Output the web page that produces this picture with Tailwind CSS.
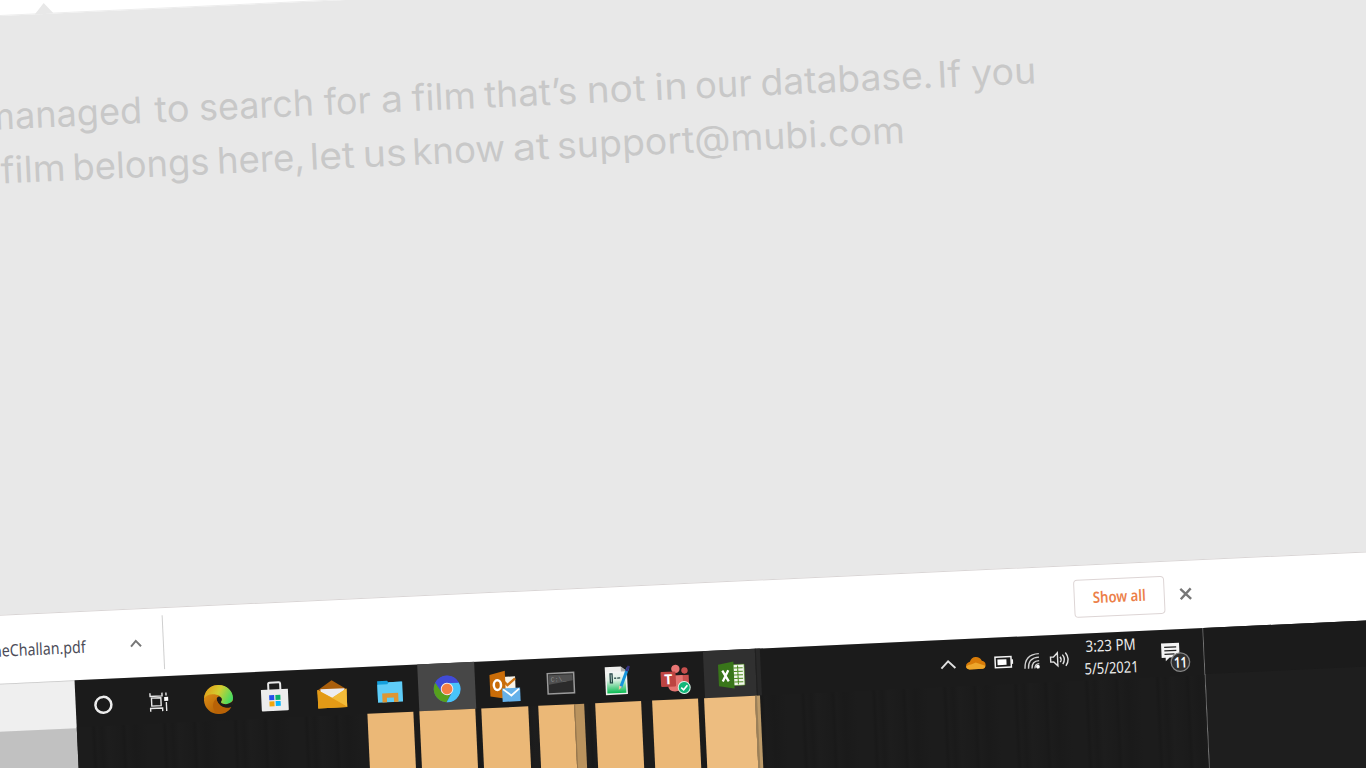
<!DOCTYPE html>
<html lang="en">
<head>
<meta charset="utf-8">
<title>Desktop</title>
<script src="https://cdn.jsdelivr.net/npm/@tailwindcss/browser@4"></script>
</head>
<body class="w-[1366px] h-[768px] overflow-hidden bg-[#e8e8e8]">
<div class="w-[1366px] h-[768px] overflow-hidden">
<main class="-ml-10 w-[1480px] h-[860px] flex flex-col origin-[40px_0px] rotate-[-2.65deg] bg-[#e8e8e8] font-['Noto_Sans',sans-serif]">

  <!-- page header edge -->
  <header class="h-[15.8px] shrink-0 bg-white flex items-end border-b border-[#ededed]">
    <svg class="ml-[74px] h-[11px] w-[19px] -mb-px" viewBox="0 0 19 11"><path d="M0 11 9.5 0 19 11z" fill="#e8e8e8"/></svg>
  </header>

  <!-- empty search result message -->
  <section class="h-[598px] shrink-0">
    <svg class="block w-[1480px] h-[598px] overflow-visible" viewBox="-40 16 1480 598" font-family="Inter, sans-serif" font-size="36.5" fill="#c8c8c8">
      <g transform="rotate(.1)">
        <text y="129.300"><tspan x="-22" textLength="159" lengthAdjust="spacingAndGlyphs">managed</tspan> <tspan x="149.500" textLength="35" lengthAdjust="spacingAndGlyphs">to</tspan> <tspan x="194" textLength="115" lengthAdjust="spacingAndGlyphs">search</tspan> <tspan x="319" textLength="47" lengthAdjust="spacingAndGlyphs">for</tspan> <tspan x="376" textLength="22" lengthAdjust="spacingAndGlyphs">a</tspan> <tspan x="407" textLength="64" lengthAdjust="spacingAndGlyphs">film</tspan> <tspan x="479.500" textLength="93" lengthAdjust="spacingAndGlyphs">that’s</tspan> <tspan x="582" textLength="59" lengthAdjust="spacingAndGlyphs">not</tspan> <tspan x="650" textLength="33" lengthAdjust="spacingAndGlyphs">in</tspan> <tspan x="690.500" textLength="57" lengthAdjust="spacingAndGlyphs">our</tspan> <tspan x="756" textLength="173" lengthAdjust="spacingAndGlyphs">database.</tspan> <tspan x="933" textLength="24" lengthAdjust="spacingAndGlyphs">If</tspan> <tspan x="967" textLength="65" lengthAdjust="spacingAndGlyphs">you</tspan></text>
        <text y="183.300"><tspan x="-7" textLength="65" lengthAdjust="spacingAndGlyphs">film</tspan> <tspan x="65" textLength="137" lengthAdjust="spacingAndGlyphs">belongs</tspan> <tspan x="209.500" textLength="88" lengthAdjust="spacingAndGlyphs">here,</tspan> <tspan x="302.500" textLength="45" lengthAdjust="spacingAndGlyphs">let</tspan> <tspan x="355.500" textLength="44" lengthAdjust="spacingAndGlyphs">us</tspan> <tspan x="405" textLength="93" lengthAdjust="spacingAndGlyphs">know</tspan> <tspan x="505.500" textLength="37" lengthAdjust="spacingAndGlyphs">at</tspan> <tspan x="550" textLength="348" lengthAdjust="spacingAndGlyphs">support@mubi.com</tspan></text>
      </g>
    </svg>
  </section>

  <!-- download shelf -->
  <section class="h-[69.4px] shrink-0 bg-white border-t border-[#d9d5d5] flex items-start pt-[7px]">
    <div class="w-[173.5px] h-[54px] border-r border-[#cfcfcf] flex items-center">
      <svg class="w-[100px] h-6 shrink-0 overflow-visible" viewBox="0 0 100 24"><text x="3" y="19" font-size="16.500" textLength="92.500" lengthAdjust="spacingAndGlyphs" fill="#4c4c58">neChallan.pdf</text></svg>
      <svg class="ml-[38.5px] mt-px w-3.5 h-3.5" viewBox="0 0 14 14"><path d="M2 10 7 4.500 12 10" fill="none" stroke="#777" stroke-width="2"/></svg>
    </div>
    <div class="ml-[911.5px] mt-[7px] w-[91px] h-[38px] border border-[#ddd5d5] rounded flex items-center justify-center">
      <svg class="w-[54px] h-6 overflow-visible" viewBox="0 0 54 24"><text x="0" y="17" font-size="15.500" font-weight="600" textLength="53" lengthAdjust="spacingAndGlyphs" fill="#ec7f49">Show all</text></svg>
    </div>
    <svg class="ml-3.5 mt-[19px] w-3.5 h-3.5" viewBox="0 0 14 14"><path d="M1.800 1.800 12.200 12.200M12.200 1.800 1.800 12.200" stroke="#777" stroke-width="2.400"/></svg>
  </section>

  <!-- taskbar and the area below it -->
  <section class="h-[177px] shrink-0 flex">
    <aside class="w-[83px] flex flex-col border-t border-[#cfcfcf]">
      <div class="h-[47px] bg-[#efefef]"></div>
      <div class="flex-1 bg-[#c1c1c1]"></div>
    </aside>
    <div class="w-[1130px] flex flex-col bg-[#1b1b1b] border-r border-[#777]">
      <nav class="h-[47px] shrink-0 flex items-stretch [&>div:nth-child(-n+11)>svg]:-translate-x-[0.8px] [&>div:nth-child(-n+11)>svg]:translate-y-[0.4px]">
        <div class="w-[57.2px] flex items-center justify-center"><svg class="w-8 h-8" viewBox="0 0 32 32"><circle cx="15.500" cy="17.500" r="8" fill="none" stroke="#ececec" stroke-width="2.500"/></svg></div>
        <div class="w-[57.2px] flex items-center justify-center"><svg class="w-8 h-8" viewBox="0 0 32 32" fill="none" stroke="#e8e8e8" stroke-width="1.400"><path d="M5.500 8v3.200h12V8M5.500 26.500v-3.200h12v3.200M6.800 13h9.400v8H6.800zM21.500 8v3M21.500 17.500v9"/><path d="M19.500 12.500h4v4h-4z" fill="#fff" stroke="none"/></svg></div>
        <div class="w-[57.2px] flex items-center justify-center"><svg class="w-8 h-8" viewBox="0 0 32 32"><defs><linearGradient id="eg" x1="0" x2="1" y1=".2" y2=".6"><stop stop-color="#e29a16"/><stop offset=".5" stop-color="#d3cf31"/><stop offset="1" stop-color="#45dc62"/></linearGradient><linearGradient id="eo" x1="0" x2=".8" y1="0" y2="1"><stop stop-color="#e99a1b"/><stop offset="1" stop-color="#a85500"/></linearGradient></defs><circle cx="16.700" cy="17.500" r="14.500" fill="url(#eo)"/><path d="M2.300 16C4 5 12 2.800 17 3c9 .3 14.500 7 14.300 13.500-.2 4-3.300 6-7.300 6-3.500 0-6-1.400-4.500-3.300 1.500-2-.3-6-4.500-6.700C9 11 4.500 12.300 2.300 16z" fill="url(#eg)"/><path d="M17.500 14.500c3 1.200 3 3.300 2 4.700-1.500 1.900 1 3.300 4.500 3.300 3 0 5.300-1 7.500-3.500l-1.500 7c-3 1.200-6 1-8.500-.5-4-2.200-6.500-6-6.500-8.500 0-1.300.8-2.300 2.500-2.500z" fill="#1b1b1b"/><path d="M15.200 16.500c-1 6 5 11.500 14 9-2.500 4.500-8 7-13 6.300-4-1-6-6-5-10 .6-2.500 2-4.500 4-5.300z" fill="#b86206"/></svg></div>
        <div class="w-[57.2px] flex items-center justify-center"><svg class="w-8 h-8" viewBox="0 0 32 32"><path d="M10 12V4.500q0-1.500 1.500-1.500h9q1.500 0 1.500 1.500V12" fill="none" stroke="#e8e8e8" stroke-width="2"/><path d="M2.500 10h27v20.500q0 1-1 1h-25q-1 0-1-1z" fill="#ececec"/><path d="M10.500 15.500h5v5h-5z" fill="#2450ea"/><path d="M16.700 15.500h5v5h-5z" fill="#0bb06c"/><path d="M10.500 21.700h5v5h-5z" fill="#f0a60c"/><path d="M16.700 21.700h5v5h-5z" fill="#07b5fa"/></svg></div>
        <div class="w-[57.2px] flex items-center justify-center"><svg class="w-8 h-8" viewBox="0 0 32 32"><path d="M2 13 16.500 3.500 31 13v4H2z" fill="#a95e0b"/><path d="M5 12h24v10H5z" fill="#ececf0"/><path d="M2 12.500v18.500h29V12.500L16.500 21z" fill="#eeb22e"/><path d="M2 12.500 31 30.500v.5H2z" fill="#e39a16"/><path d="M31 12.500v18L16.500 21z" fill="#f2bb39"/></svg></div>
        <div class="w-[57.2px] flex items-center justify-center"><svg class="w-8 h-8" viewBox="0 0 32 32"><path d="M4 6.500h10l1 1.500h13.500V27H4z" fill="#14a0dd"/><path d="M4 10h10l1.500-2H29V28H4z" fill="#5fcdf8"/><path d="M8.500 28v-9h16v9h-4.500v-4.500h-7V28z" fill="#dd9634"/></svg></div>
        <div class="w-[57.2px] flex items-center justify-center bg-[#474747]"><svg class="w-8 h-8" viewBox="0 0 32 32"><circle cx="16.500" cy="17.500" r="13.300" fill="#414bd7"/><path d="M5 10.800a13.300 13.300 0 0 0 10.500 20L21 21z" fill="#56a01d"/><path d="M16.500 11.500h12a13.300 13.300 0 0 1-13 19.300L21.500 21z" fill="#49c4f8"/><path d="M5 10.800a13.300 13.300 0 0 1 23.500.7h-12L11 20.500z" fill="#414bd7"/><circle cx="16.500" cy="17.500" r="6.300" fill="#f4e6e5"/><circle cx="16.500" cy="17.500" r="5.300" fill="#f57f45"/></svg></div>
        <div class="w-[57.2px] flex items-center justify-center"><svg class="w-8 h-8 overflow-visible" viewBox="0 0 32 32"><path d="M15 8h13v17H15z" fill="#f8f3e8"/><path d="m16 12 4 4.500L28 10" stroke="#cf7412" stroke-width="2.300" fill="none"/><path d="M2.500 5.500 18 2v28L2.500 27z" fill="#c96c08"/><ellipse cx="10" cy="16" rx="3.600" ry="4.800" fill="none" stroke="#fff" stroke-width="2.500"/><path d="M14.500 19.500h18V33h-18z" fill="#65b1ea"/><path d="m15.500 20.500 8 6.500 8-6.500" fill="none" stroke="#fff" stroke-width="1.800"/></svg></div>
        <div class="w-[57.2px] flex items-center justify-center"><svg class="w-8 h-8" viewBox="0 0 32 32"><path d="M3.300 6.800h26.400v20.400H3.300z" fill="#2b2b2b" stroke="#9a9a9a" stroke-width="1.500"/><path d="M4.500 8.500h24v6l-24 3.500z" fill="#505050"/><text x="6.500" y="15" font-size="6.500" fill="#8a8a8a" font-family="Liberation Mono, monospace">C:\_</text></svg></div>
        <div class="w-[57.2px] flex items-center justify-center"><svg class="w-8 h-8" viewBox="0 0 32 32"><defs><linearGradient id="np" x2="0" y2="1"><stop stop-color="#f6f6f6"/><stop offset=".4" stop-color="#d9efe0"/><stop offset="1" stop-color="#08bc52"/></linearGradient></defs><path d="M4 3h16l6 5v23H4z" fill="#f0f0ee"/><path d="M5.500 8h19v21.500h-19z" fill="url(#np)"/><path d="M20 3v5h6z" fill="#aaa"/><path d="M9 10v9h2v-9zM13 14.500h2m1 0h3" fill="none" stroke="#244" stroke-width="1.300"/><path d="M27 5 19 24" stroke="#1694db" stroke-width="3"/><path d="m25.500 8 2.700-5" stroke="#39307e" stroke-width="2.500"/><path d="m17.500 22 3 1.500-3.500 3z" fill="#e9c79f"/></svg></div>
        <div class="w-[57.2px] flex items-center justify-center"><svg class="w-8 h-8 overflow-visible" viewBox="0 0 32 32"><circle cx="17.500" cy="8" r="4.200" fill="#e87674"/><circle cx="26.500" cy="10" r="3.200" fill="#c74f4d"/><path d="M21.500 14.500h9v9q-2 5-7 5z" fill="#c95250"/><path d="M9.500 14.500h15v8q0 8-8 8-7 0-7-7z" fill="#e57572"/><rect x="2.500" y="10.500" width="15" height="15" rx="1" fill="#bd4442"/><text x="10" y="23" font-size="14" font-weight="700" text-anchor="middle" fill="#fff">T</text><circle cx="25.500" cy="27" r="6" fill="#12b779" stroke="#dff3ea" stroke-width="1"/><path d="m22.500 27 2.300 2.300 4-4.500" stroke="#fff" stroke-width="1.600" fill="none"/></svg></div>
        <div class="w-[51.500px] flex items-center justify-center bg-[#303030]"><svg class="w-8 h-8 translate-x-[2px] translate-y-[0.8px]" viewBox="0 0 32 32"><path d="M16 6h12.500v21H16z" fill="#f2f6ec" stroke="#4b8b1d" stroke-width=".6"/><path d="M18 9.500h9M18 13h9M18 16.500h9M18 20h9M18 23.500h9M22 7v19" stroke="#4b8b1d" stroke-width="1"/><path d="M2.500 5.500 18 3v27L2.500 27z" fill="#39761a"/><path d="m6.500 11.500 6 11m0-11-6 11" stroke="#fff" stroke-width="2.300"/></svg></div>
        <div class="w-[5.500px] bg-[#292929] border-l border-[#202020]"></div>
        <div class="ml-[172.500px] pt-[1.5px] flex items-center">
          <svg class="w-7 h-7" viewBox="0 0 28 28"><path d="m7.500 18.500 7-7 7 7" fill="none" stroke="#e0e0e0" stroke-width="1.900"/></svg>
          <svg class="w-7 h-7" viewBox="0 0 28 28"><path d="M7.500 20.500q-3.500-.5-3.300-3.500t4-4q1.800-4.500 6-4.500t6 4q3.500.6 3.600 4 0 3.300-3 4z" fill="#d87b08"/><path d="M7.500 20.500q-3.300-.5-3.200-3 2-2 5.700-2l4-1.500 9.500 3.500q-.2 2.500-2.700 3z" fill="#eda62b"/></svg>
          <svg class="w-7 h-7" viewBox="0 0 28 28"><path d="M5.500 9.500h16v10.500h-16z" fill="none" stroke="#f4f4f4" stroke-width="1.500"/><path d="M7.800 12h9v5.600h-9z" fill="#fff"/><path d="M22.500 12.500v4.500" stroke="#f4f4f4" stroke-width="1.800"/></svg>
          <svg class="w-7 h-7" viewBox="0 0 28 28" fill="none" stroke="#d0d0d0" stroke-width="1.400"><path d="M7 22.500Q7 8 21.500 8M10.500 22.500q0-11 11-11M14 22.500q0-7.500 7.500-7.500M17 22.500q0-4.500 4.500-4.500"/><circle cx="20" cy="21" r="1.900" fill="#fff" stroke="none"/></svg>
          <svg class="w-7 h-7" viewBox="0 0 28 28" fill="none" stroke="#e0e0e0" stroke-width="1.400"><path d="M5 12h3l4-4v13l-4-4H5zM14.500 12q2 2.700 0 5.500M17 10q3.500 4.700 0 9.500M20 8q5 6.700 0 13.500"/></svg>
        </div>
        <svg class="w-[74px] h-[47px]" viewBox="0 0 74 47" font-size="15.800" fill="#ececec"><text x="12.500" y="18.500" textLength="50" lengthAdjust="spacingAndGlyphs">3:23 PM</text><text x="10.500" y="41" textLength="54" lengthAdjust="spacingAndGlyphs">5/5/2021</text></svg>
        <svg class="ml-[10px] w-10 h-[47px]" viewBox="0 0 40 47"><path d="M4 13.500h18V28H12l-4 3.500V28H4z" fill="#f4f4f4"/><path d="M7 17.500h12M7 21h12M7 24.500h10" stroke="#222" stroke-width="1.300"/><circle cx="22.500" cy="33" r="9.300" fill="#303030" stroke="#858585" stroke-width="1.300"/><text x="22.500" y="38.500" font-size="15" font-weight="600" text-anchor="middle" textLength="13" lengthAdjust="spacingAndGlyphs" fill="#fff">11</text></svg>
      </nav>
      <div class="flex-1 flex bg-[repeating-linear-gradient(90deg,#1c1c1c_0px,#1c1c1c_14px,#191919_17px,#1c1c1c_20px,#1a1a1a_25px,#1d1d1d_31px,#1b1b1b_44px,#191919_47px,#1c1c1c_50px,#1a1a1a_58px,#1c1c1c_71px)]">
        <div class="ml-[291px] w-[45.500px] bg-[#ebb877]"></div>
        <div class="ml-[6.500px] w-[55.500px] bg-[#ebb877]"></div>
        <div class="ml-[6.500px] w-[46.500px] bg-[#ebb877]"></div>
        <div class="ml-[10.500px] w-9 bg-[#ebb877]"></div>
        <div class="w-2.5 bg-[#ba935e] border-l border-[#97774e]"></div>
        <div class="ml-[10.500px] w-[46.500px] bg-[#ebb877]"></div>
        <div class="ml-[10.500px] w-[46.500px] bg-[#ebb877]"></div>
        <div class="ml-[6px] w-[51px] bg-[#edbd80]"></div>
        <div class="w-[5px] bg-[#bd9b69] border-l-2 border-[#9b8059]"></div>
      </div>
    </div>
    <div class="flex-1 flex flex-col bg-[#1e1e1e]"><div class="h-[46px] bg-[#1b1b1b]"></div></div>
  </section>
</main>
</div>
</body>
</html>
